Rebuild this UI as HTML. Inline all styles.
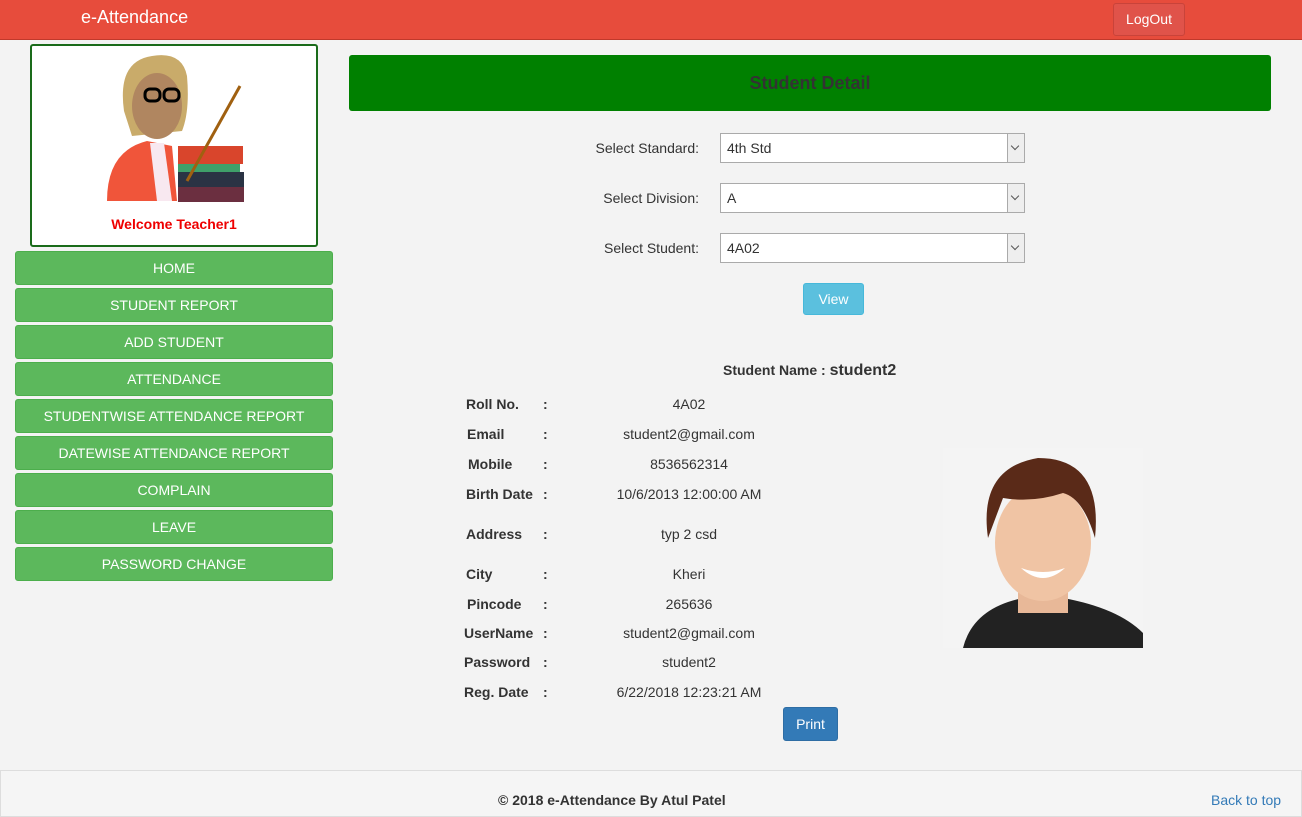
<!DOCTYPE html>
<html><head><style>
body{margin:0;width:1302px;height:815px;background:#f3f3f3;font-family:"Liberation Sans",Arial,sans-serif;position:relative;overflow:hidden;font-size:14px;color:#333}
.a{position:absolute}
.nav{left:0;top:0;width:1302px;height:39px;background:#e74c3c;border-bottom:1px solid #c0392b}
.brand{left:81px;top:7px;color:#fff;font-size:18px}
.logout{left:1113px;top:3px;width:70px;height:31px;background:#e0534a;border:1px solid #c9433a;border-radius:3px;color:#fff;text-align:center;line-height:31px;font-size:14px}
.prof{left:30px;top:44px;width:284px;height:199px;background:#fff;border:2px solid #1a6b1a;border-radius:3px}
.welcome{left:0;width:284px;top:170px;text-align:center;color:#e00;font-weight:bold;font-size:14px}
.btn{left:15px;width:316px;height:32px;background:#5cb85c;border:1px solid #4cae4c;border-radius:3px;color:#fff;text-align:center;line-height:32px;font-size:14px}
.hdr{left:349px;top:55px;width:922px;height:56px;background:#008000;border-radius:3px;text-align:center;line-height:56px;font-weight:bold;font-size:18px;color:#333}
.lbl{width:250px;text-align:right}
.sel{left:720px;width:303px;height:28px;background:#fff;border:1px solid #aaa;line-height:28px;font-size:14px}
.sel span{margin-left:6px}
.sel i{position:absolute;right:0;top:0;width:16px;height:28px;background:#eee;border-left:1px solid #aaa}
.sel i:after{content:"";position:absolute;left:4px;top:9px;width:5px;height:5px;border-right:1px solid #555;border-bottom:1px solid #555;transform:rotate(45deg)}
.k{left:466px;font-weight:bold}
.c{left:543px;font-weight:bold}
.v{left:589px;width:200px;text-align:center}
.foot{left:0;top:770px;width:1300px;height:45px;border:1px solid #ddd;background:#f5f5f5}
</style></head><body>
<div class="a nav"></div>
<div class="a brand">e-Attendance</div>
<div class="a logout">LogOut</div>
<div class="a prof">
<svg class="a" style="left:70px;top:5px" width="150" height="160" viewBox="0 0 150 160">
<path d="M5 150 Q5 100 45 90 L70 95 L75 150 Z" fill="#f0553a"/>
<path d="M48 92 L62 92 L70 150 L55 150 Z" fill="#f8e8f0"/>
<path d="M22 60 Q15 10 50 5 Q80 0 85 25 Q88 60 80 80 L30 85 Z" fill="#c9ab6a"/>
<ellipse cx="55" cy="55" rx="25" ry="33" fill="#b08660"/>
<rect x="43" y="38" width="15" height="12" rx="5" fill="none" stroke="#000" stroke-width="3"/>
<rect x="62" y="38" width="15" height="12" rx="5" fill="none" stroke="#000" stroke-width="3"/>
<rect x="76" y="95" width="65" height="18" fill="#d9452c"/>
<rect x="76" y="113" width="62" height="8" fill="#3fa06a"/>
<rect x="76" y="121" width="66" height="15" fill="#2a3344"/>
<rect x="76" y="136" width="66" height="15" fill="#6b2f40"/>
<line x1="85" y1="130" x2="138" y2="35" stroke="#a06010" stroke-width="3"/>
</svg>
<div class="a welcome">Welcome Teacher1</div>
</div>
<div class="a btn" style="top:251px">HOME</div>
<div class="a btn" style="top:288px">STUDENT REPORT</div>
<div class="a btn" style="top:325px">ADD STUDENT</div>
<div class="a btn" style="top:362px">ATTENDANCE</div>
<div class="a btn" style="top:399px">STUDENTWISE ATTENDANCE REPORT</div>
<div class="a btn" style="top:436px">DATEWISE ATTENDANCE REPORT</div>
<div class="a btn" style="top:473px">COMPLAIN</div>
<div class="a btn" style="top:510px">LEAVE</div>
<div class="a btn" style="top:547px">PASSWORD CHANGE</div>
<div class="a hdr">Student Detail</div>
<div class="a lbl" style="left:449px;top:140px">Select Standard:</div>
<div class="a lbl" style="left:449px;top:190px">Select Division:</div>
<div class="a lbl" style="left:449px;top:240px">Select Student:</div>
<div class="a sel" style="top:133px"><span>4th Std</span><i></i></div>
<div class="a sel" style="top:183px"><span>A</span><i></i></div>
<div class="a sel" style="top:233px"><span>4A02</span><i></i></div>
<div class="a" style="left:803px;top:283px;width:59px;height:30px;background:#5bc0de;border:1px solid #46b8da;border-radius:3px;color:#fff;text-align:center;line-height:30px">View</div>
<div class="a" style="left:723px;top:362px;font-weight:bold">Student Name : <span style="font-size:16px">student2</span></div>
<div class="a k" style="top:396px">Roll No.</div><div class="a c" style="top:396px">:</div><div class="a v" style="top:396px">4A02</div>
<div class="a k" style="top:426px;left:467px">Email</div><div class="a c" style="top:426px">:</div><div class="a v" style="top:426px">student2@gmail.com</div>
<div class="a k" style="top:456px;left:468px">Mobile</div><div class="a c" style="top:456px">:</div><div class="a v" style="top:456px">8536562314</div>
<div class="a k" style="top:486px">Birth Date</div><div class="a c" style="top:486px">:</div><div class="a v" style="top:486px">10/6/2013 12:00:00 AM</div>
<div class="a k" style="top:526px">Address</div><div class="a c" style="top:526px">:</div><div class="a v" style="top:526px">typ 2 csd</div>
<div class="a k" style="top:566px">City</div><div class="a c" style="top:566px">:</div><div class="a v" style="top:566px">Kheri</div>
<div class="a k" style="top:596px;left:467px">Pincode</div><div class="a c" style="top:596px">:</div><div class="a v" style="top:596px">265636</div>
<div class="a k" style="top:625px;left:464px">UserName</div><div class="a c" style="top:625px">:</div><div class="a v" style="top:625px">student2@gmail.com</div>
<div class="a k" style="top:654px;left:464px">Password</div><div class="a c" style="top:654px">:</div><div class="a v" style="top:654px">student2</div>
<div class="a k" style="top:684px;left:464px">Reg. Date</div><div class="a c" style="top:684px">:</div><div class="a v" style="top:684px">6/22/2018 12:23:21 AM</div>
<svg class="a" style="left:943px;top:448px" width="200" height="200" viewBox="0 0 200 200">
<rect width="200" height="200" fill="#f4f4f4"/>
<path d="M20 200 Q30 160 80 150 L120 150 Q175 160 200 185 L200 200 Z" fill="#222"/>
<rect x="75" y="125" width="50" height="40" fill="#e8b898"/>
<ellipse cx="100" cy="95" rx="48" ry="58" fill="#f0c4a4"/>
<path d="M45 90 Q35 20 95 10 Q160 10 152 90 Q140 50 120 45 Q90 55 60 50 Z" fill="#5a2a18"/>
<path d="M78 120 Q100 140 122 120 Q100 128 78 120Z" fill="#fff"/>
</svg>
<div class="a" style="left:783px;top:707px;width:53px;height:32px;background:#337ab7;border:1px solid #2e6da4;border-radius:3px;color:#fff;text-align:center;line-height:32px">Print</div>
<div class="a foot"></div>
<div class="a" style="left:498px;top:792px;font-weight:bold">© 2018 e-Attendance By Atul Patel</div>
<div class="a" style="left:1211px;top:792px;color:#337ab7">Back to top</div>
</body></html>
